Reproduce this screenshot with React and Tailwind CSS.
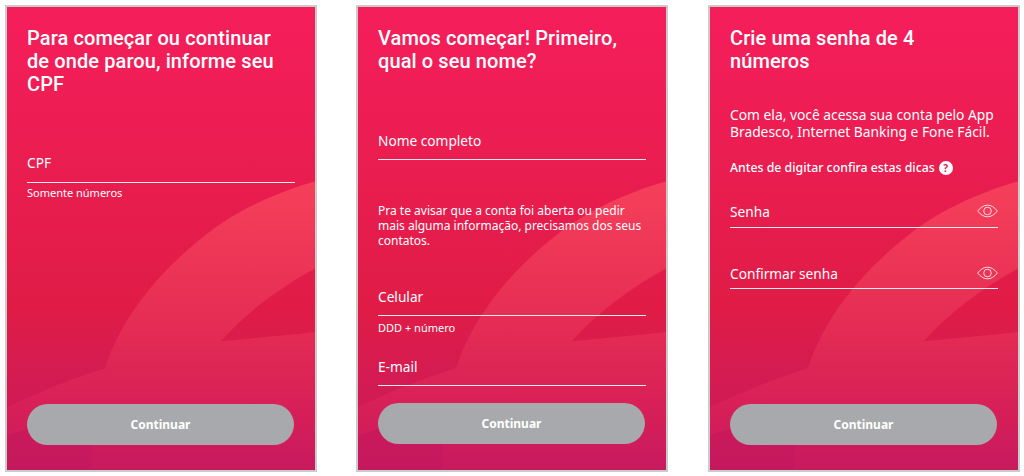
import React from "react";

const Backdrop = () => (
  <svg className="absolute inset-0 w-full h-full" viewBox="0 0 308 464" preserveAspectRatio="none" fill="none">
    <defs>
      <linearGradient id="wave" x1="0" y1="175" x2="0" y2="464" gradientUnits="userSpaceOnUse">
        <stop offset="0" stopColor="#f6405a" />
        <stop offset="0.5" stopColor="#e52c54" />
        <stop offset="0.8" stopColor="#d61f58" />
        <stop offset="1" stopColor="#c81a5f" />
      </linearGradient>
    </defs>
    <path
      d="M308 175C265 187 225 207 198 229C165 255 118 300 98 362C62 373 30 387 0 401V429C30 420 60 408 85 398V464H308V326L214 335C240 305 275 280 308 262Z"
      fill="url(#wave)"
    />
  </svg>
);

const EyeIcon = () => (
  <svg className="w-[21px] h-[14px] shrink-0 -mt-[2px]" viewBox="0 0 21 14" fill="none" stroke="white" strokeWidth="0.8">
    <path d="M0.700 7C3.500 3.200 7 1.200 10.500 1.200C14 1.200 17.500 3.200 20.300 7C17.500 10.800 14 12.800 10.500 12.800C7 12.800 3.500 10.800 0.700 7Z" />
    <circle cx="10.500" cy="7" r="3.800" />
  </svg>
);

const Field = ({ label, hint, icon, className, lineGap = "mt-[7px]", hintGap = "mt-[5px]" }) => (
  <div className={className}>
    <div className="flex items-center justify-between h-[22px]">
      <span className="text-[13.700px] leading-[20px]">{label}</span>
      {icon && <EyeIcon />}
    </div>
    <div className={`h-px bg-white/90 ${lineGap}`}></div>
    {hint && <p className={`text-[11px] leading-[14px] ${hintGap}`}>{hint}</p>}
  </div>
);

const Heading = ({ children, className }) => (
  <h1 className={`font-['Roboto',sans-serif] text-[20px] leading-[23px] font-medium tracking-[0.1px] ${className}`}>
    {children}
  </h1>
);

const Panel = ({ children, buttonGap, className = "" }) => (
  <div className={`relative w-[312px] h-[467px] border-2 border-[#cbcbcb] overflow-hidden bg-gradient-to-b from-[#f51e5b] via-[#e01c46] via-65% to-[#c4185f] ${className}`}>
    <Backdrop />
    <div className="relative h-full flex flex-col px-[20px] pt-[20px] text-white">
      {children}
      <button className={`${buttonGap} h-[41px] w-[267px] shrink-0 rounded-[21px] bg-[#a7a9ac] text-[12px] font-bold text-white`}>
        Continuar
      </button>
    </div>
  </div>
);

export default function App() {
  return (
    <div className="w-[1024px] h-[476px] bg-white pt-[5px] pl-[5px] flex gap-[39px] overflow-hidden font-['Noto_Sans',sans-serif]">
      <Panel buttonGap="mt-[204px]">
        <Heading className="h-[69px]">
          Para começar ou continuar<br />de onde parou, informe seu<br />CPF
        </Heading>
        <Field className="mt-[56px]" lineGap="mt-[8px]" hintGap="mt-[3px]" label="CPF" hint="Somente números" />
      </Panel>
      <Panel buttonGap="mt-[17px]">
        <Heading className="h-[46px]">
          Vamos começar! Primeiro,<br />qual o seu nome?
        </Heading>
        <Field className="mt-[57px]" label="Nome completo" />
        <p className="text-[12px] leading-[15px] mt-[43px]">
          Pra te avisar que a conta foi aberta ou pedir<br />mais alguma informação, precisamos dos seus<br />contatos.
        </p>
        <Field className="mt-[38px]" label="Celular" hint="DDD + número" />
        <Field className="mt-[21px]" label="E-mail" />
      </Panel>
      <Panel buttonGap="mt-[115px]" className="ml-px">
        <Heading className="h-[46px]">
          Crie uma senha de 4<br />números
        </Heading>
        <p className="text-[13.800px] leading-[17px] mt-[33px]">
          Com ela, você acessa sua conta pelo App<br />Bradesco, Internet Banking e Fone Fácil.
        </p>
        <div className="flex items-center gap-[4px] mt-[20px] text-[12.300px] leading-[16px] font-medium">
          Antes de digitar confira estas dicas
          <span className="w-[14px] h-[14px] rounded-full bg-white text-[#e01c4a] text-[10px] leading-[14px] font-bold text-center">?</span>
        </div>
        <Field className="mt-[25px]" lineGap="mt-[4px]" label="Senha" icon />
        <Field className="mt-[35px]" lineGap="mt-[3px]" label="Confirmar senha" icon />
      </Panel>
    </div>
  );
}
